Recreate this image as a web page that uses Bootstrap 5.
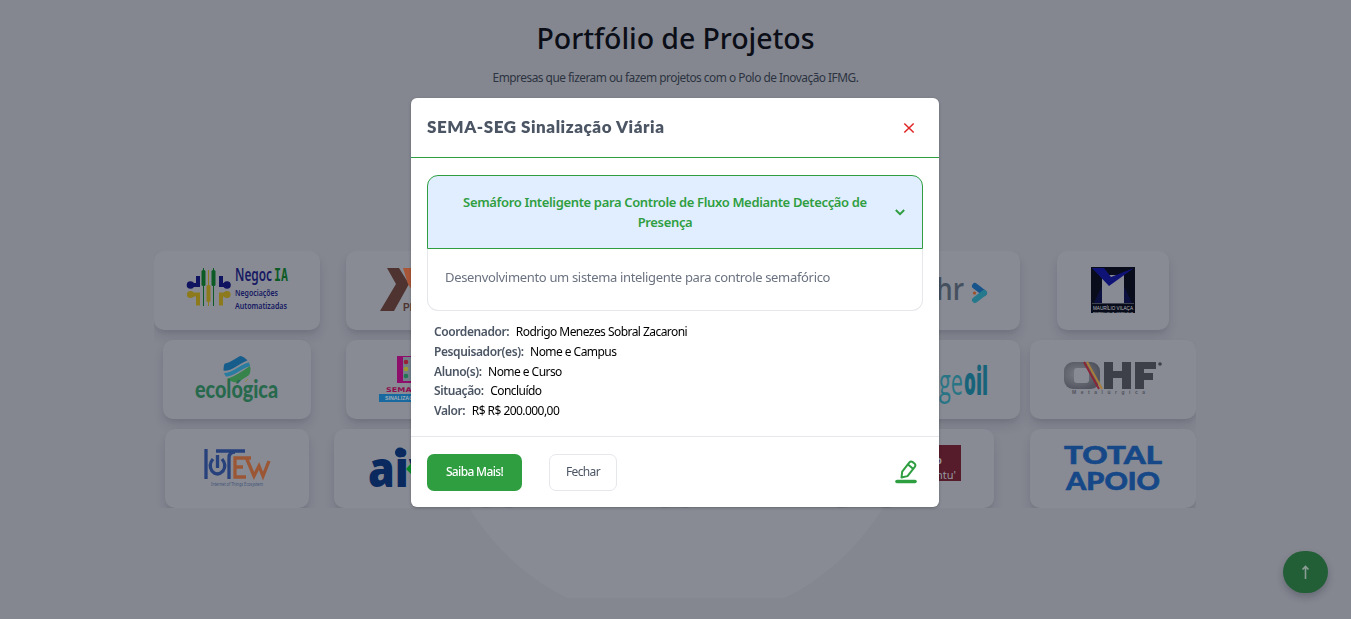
<!DOCTYPE html>
<html lang="pt-BR">
<head>
<meta charset="utf-8">
<title>Portfólio de Projetos</title>
<link rel="stylesheet" href="https://cdn.jsdelivr.net/npm/bootstrap@5.3.0/dist/css/bootstrap.min.css">
<style>
body{background:#848790;font-family:"Noto Sans","Open Sans",sans-serif;height:619px;overflow:hidden;color:#0b0e17}
.page-title{font-size:28.500px;font-weight:500;line-height:36px;padding-top:20px;margin:0;letter-spacing:-.08px}
.page-sub{font-size:11.900px;line-height:18px;margin:12px 0 0;color:#2c3340;letter-spacing:-.51px}
.disc{position:absolute;left:434px;top:140px;width:484px;height:457.5px;z-index:-1}
.logo-grid{width:1042px;margin:165px 0 0 154px;display:grid;grid-template-columns:repeat(6,166px);justify-content:space-between;grid-auto-rows:79px;row-gap:10.2px;overflow:hidden;justify-items:center}
.tile{background:#888b94;border-radius:10px;box-shadow:0 7px 12px -2px rgba(25,30,45,.15),0 3px 5px -2px rgba(25,30,45,.08);width:166px}
.tile svg{display:block;width:100%;height:79px}
.w164{width:164px}.w148{width:148px}.w144{width:144px}.w133{width:133px}.w157{width:157px}.w112{width:112px}
.modal-dialog{width:528px;max-width:528px;margin:98px 0 0 411px}
.modal-content{border:0;border-radius:6px;height:409px;box-shadow:0 1px 3px rgba(0,0,0,.25)}
.modal-header{height:60px;padding:0 24px 0 16px;border-bottom:1px solid #2f9e41;border-radius:0}
.modal-title{font:800 17px/24px Lato,sans-serif;color:#4b5563;letter-spacing:.55px;position:relative;top:-1px}
.modal-body{padding:17px 16px 0}
.acc-head{height:74px;border:1px solid #2f9e41;border-radius:11px 11px 0 0;background:#e1eeff;color:#2f9e41;font-size:13px;font-weight:600;line-height:20px;padding:0 17px 0 7px;letter-spacing:-.35px}
.acc-text{height:62px;border:1px solid #e5e7eb;border-top:0;border-radius:0 0 11px 11px;color:#6b7280;font-size:13px;line-height:20px;padding:18px 17px;letter-spacing:-.33px}
.facts{margin:11px 0 0 7px;font-size:12px;line-height:19.8px;color:#000;letter-spacing:-.55px}
.facts b{color:#4b5563;font-weight:600;margin-right:6.500px;letter-spacing:-.4px}
.modal-footer{height:71px;border-top:1px solid #e5e7eb;padding:0 21px 0 16px}
.modal-footer>*{margin:0}
.modal-footer .btn{height:37px;font-size:12px;border-radius:7px;padding:0;letter-spacing:-.65px;line-height:34px}
.btn-more{width:95px;background:#2f9e41;color:#fff;font-weight:500}
.modal-footer .btn-shut{width:68px;border:1px solid #e5e7eb;color:#4b5563;margin-left:27px}
.to-top{position:absolute;left:1283px;top:551px;width:45px;height:42px;border-radius:21px;background:#225f37;box-shadow:0 4px 7px rgba(20,25,40,.25)}
</style>
<script src="https://cdn.jsdelivr.net/npm/bootstrap@5.3.0/dist/js/bootstrap.bundle.min.js"></script>
</head>
<body>
<header class="text-center">
<h1 class="page-title">Portfólio de Projetos</h1>
<p class="page-sub">Empresas que fizeram ou fazem projetos com o Polo de Inovação IFMG.</p>
</header>
<svg class="disc" viewBox="0 0 484 457.5"><circle cx="242" cy="242" r="242" fill="#888b94"/></svg>
<main class="logo-grid">
<!-- first row -->
<div class="tile"><svg viewBox="0 0 166 79">
<g fill="none" stroke="#10135f" stroke-width="4"><path d="M35 34h9v-9M75 34h-8v-9"/></g>
<g fill="none" stroke="#8c7a1c" stroke-width="4"><path d="M35 43.500h9v11M75 43.500h-8v11"/></g>
<g fill="#10135f"><circle cx="36.500" cy="34" r="3.800"/><circle cx="73" cy="34" r="3.800"/></g><g fill="#8c7a1c"><circle cx="36.500" cy="43.500" r="3.600"/><circle cx="73" cy="43.500" r="3.600"/><rect x="52.500" y="34" width="4" height="17" rx="1.500"/><path d="M54 19h1v36h-1z"/></g>
<g fill="#0c5b25"><rect x="47.500" y="19" width="4" height="16" rx="1.500"/><rect x="57.500" y="19" width="4" height="16" rx="1.500"/><path d="M49 17h1v38h-1zM59 17h1v38h-1z"/></g>
<g font-family="Noto Sans" font-weight="600" fill="#171a62"><text x="81" y="30" font-size="17" textLength="37" lengthAdjust="spacingAndGlyphs">Negoc</text><text x="120" y="30" font-family="DejaVu Sans Mono" font-weight="700" font-size="17" fill="#0c5b25" textLength="14" lengthAdjust="spacingAndGlyphs">IA</text><text x="81" y="45" font-size="9.500" textLength="43" lengthAdjust="spacingAndGlyphs">Negociações</text><text x="81" y="58" font-size="9.500" textLength="52" lengthAdjust="spacingAndGlyphs">Automatizadas</text></g></svg></div>
<div class="tile w133"><svg viewBox="0 0 133 79"><path fill="#4e3330" d="M41 17h12l10 16-15 27H34l16-27z"/><path fill="#a95637" d="M58 17h14v32L62 33l-5-16z"/><text x="57" y="60" font-family="Liberation Sans" font-weight="700" font-size="10" fill="#4e3330">PRO</text></svg></div>
<div class="tile"></div><div class="tile"></div>
<div class="tile w164"><svg viewBox="0 0 164 79"><text x="80" y="49" font-family="Open Sans" font-weight="600" font-size="31" fill="#45505f" textLength="28" lengthAdjust="spacingAndGlyphs">hr</text><path d="M119 35l9 7" fill="none" stroke="#17548b" stroke-width="6" stroke-linecap="round"/><path d="M128 42l-9 7" fill="none" stroke="#26798c" stroke-width="6" stroke-linecap="round"/><circle cx="118.500" cy="42" r="1.600" fill="#9d4f26"/></svg></div>
<div class="tile w112"><svg viewBox="0 0 112 79"><path fill="#090d1b" d="M34 16h44v46H34z"/><path fill="#888b94" d="M45 24h22v28H45z"/><path fill="#101376" d="M35 17h12l7 9 23-9-25 18z"/><path fill="#0c103f" d="M45 35v17h-8zM67 35v17h8z"/><path d="M35 52.500h42" stroke="#777a84" stroke-width=".5"/><g font-family="Liberation Sans" fill="#b5b8bf"><text x="36" y="58.500" font-size="5" textLength="40" lengthAdjust="spacingAndGlyphs">MAURÍLIO VILAÇA</text><text x="36" y="61.800" font-size="2.300" textLength="40" lengthAdjust="spacingAndGlyphs">ENGENHARIA E AUTOMAÇÃO</text></g></svg></div>
<!-- second row -->
<div class="tile w148"><svg viewBox="0 0 148 79"><defs><clipPath id="globe"><circle cx="74" cy="29" r="13.500"/></clipPath></defs><g clip-path="url(#globe)" fill="none"><path d="M59 27c9 2 16-8 27-11" stroke="#175d8b" stroke-width="7"/><path d="M61 35c11 0 17-10 27-11" stroke="#277ca0" stroke-width="4"/><path d="M64 42c9-1 17-8 25-13" stroke="#37834c" stroke-width="7"/></g><path d="M82 42l3-3" stroke="#8b8a38"/><text x="32" y="58" font-family="Lato" font-weight="900" font-size="24" fill="#27694c" textLength="83" lengthAdjust="spacingAndGlyphs">ecológica</text></svg></div>
<div class="tile w133"><svg viewBox="0 0 133 79"><path fill="#8d0e6b" d="M51 16h24v27H51z"/><path fill="#73808a" d="M57 17h12v24H57z"/><circle cx="60" cy="22" r="2.300" fill="#9a2038"/><circle cx="60" cy="29" r="2.300" fill="#a0982d"/><circle cx="60" cy="36" r="2.300" fill="#247454"/><text x="40" y="51.500" font-family="DejaVu Sans" font-weight="700" font-size="6.500" fill="#8d0e4f" textLength="47" lengthAdjust="spacingAndGlyphs">SEMA-SEG</text><path fill="#1769a0" d="M33 54h66v8H33z"/><text x="39" y="60" font-family="Liberation Sans" font-weight="700" font-size="4.600" fill="#a2aeb8" textLength="55" lengthAdjust="spacingAndGlyphs">SINALIZAÇÃO VIÁRIA</text></svg></div>
<div class="tile"></div><div class="tile"></div>
<div class="tile w164"><svg viewBox="0 0 164 79"><text x="83" y="55" font-family="Open Sans" font-size="36" fill="#297585" textLength="24" lengthAdjust="spacingAndGlyphs">ge</text><text x="108" y="55" font-family="Open Sans" font-weight="800" font-size="39" fill="#17647a" textLength="24" lengthAdjust="spacingAndGlyphs">oil</text></svg></div>
<div class="tile"><svg viewBox="0 0 166 79"><defs><radialGradient id="steel" cx=".38" cy=".45" r=".6"><stop stop-color="#7b7d85"/><stop offset="1" stop-color="#51545e"/></radialGradient></defs><rect x="34" y="22" width="36" height="27" rx="9" fill="url(#steel)"/><rect x="44" y="28" width="15" height="15" rx="3" fill="#888b94"/><path d="M54 22l15 27" stroke="#8a2637" stroke-width="2"/><path d="M57 22l15 27" stroke="#a87f3a" stroke-width="2"/><path fill="#3d4049" d="M74 22h9v9h9v-9h9v27h-9V38h-9v11h-9zM105 22h21v7h-12v4h9v7h-9v9h-9z"/><circle cx="130" cy="24" r="1.800" fill="#3d4049"/><text x="42" y="54" font-family="Liberation Sans" font-weight="700" font-size="5" fill="#50535d" textLength="73">Metalúrgica</text></svg></div>
<!-- third row -->
<div class="tile w144"><svg viewBox="0 0 144 79"><g fill="none" stroke="#27417c" stroke-width="3.300"><path d="M41 20v30M51 22h29M64 50V29q0-6 6-6M48 30q-5 6-1 12 5 6 11 0 4-6-1-12M52.500 26v13"/></g><g fill="none" stroke="#9b5735" stroke-width="3.300"><path d="M86 29H70v19h11M70 38h8M81 28l8 19 5-10 4 10 6-15"/></g><text x="46" y="57" font-family="Noto Sans" font-size="4.500" fill="#425579" textLength="52" lengthAdjust="spacingAndGlyphs">Internet of Things Ecosystem</text></svg></div>
<div class="tile w157"><svg viewBox="0 0 157 79"><text x="34" y="58" font-family="Open Sans" font-weight="800" font-size="49" fill="#0a295f" textLength="67" lengthAdjust="spacingAndGlyphs">aiv</text><circle cx="66" cy="23.500" r="5" fill="#0a295f"/><path d="M72 40l8-9v17z" fill="#0b8a27"/></svg></div>
<div class="tile"></div><div class="tile"></div>
<div class="tile w112"><svg viewBox="0 0 112 79"><path fill="#571c2b" d="M32 16h47v36H32z"/><g fill="#9599a1" font-family="Noto Sans"><text x="53" y="35" font-size="11" font-weight="700">p</text><text x="54" y="50" font-size="11">ntu'</text></g></svg></div>
<div class="tile"><svg viewBox="0 0 166 79"><g font-family="Lato" font-weight="900" fill="#164888" stroke="#164888" stroke-width=".6" font-size="25.500"><text x="34" y="35" textLength="98" lengthAdjust="spacingAndGlyphs">TOTAL</text><text x="36" y="61" textLength="94" lengthAdjust="spacingAndGlyphs">APOIO</text></g></svg></div>
</main>
<button class="btn border-0 p-0 to-top" aria-label="Voltar ao topo"><svg class="d-block mx-auto" width="12" height="16" viewBox="0 0 12 16"><path d="M5.500 15V3M2.500 5.500l3-3 3 3" fill="none" stroke="#8b9d95" stroke-width="1.600"/></svg></button>
<div class="modal d-block overflow-hidden" tabindex="-1"><div class="modal-dialog"><div class="modal-content">
<div class="modal-header d-flex justify-content-between align-items-center"><h2 class="modal-title">SEMA-SEG Sinalização Viária</h2>
<svg width="12" height="12" viewBox="0 0 12 12"><path d="M1.300 1.500l9.400 9M10.700 1.500l-9.400 9" stroke="#e02424" stroke-width="1.500"/></svg></div>
<div class="modal-body">
<div class="acc-head d-flex align-items-center"><div class="flex-grow-1 text-center">Semáforo Inteligente para Controle de Fluxo Mediante Detecção de<br>Presença</div><svg width="10" height="7" viewBox="0 0 10 7"><path d="M.8 1L5 5.200 9.200 1" fill="none" stroke="#2f9e41" stroke-width="2"/></svg></div>
<div class="acc-text">Desenvolvimento um sistema inteligente para controle semafórico</div>
<div class="facts">
<div><b>Coordenador:</b>Rodrigo Menezes Sobral Zacaroni</div>
<div><b>Pesquisador(es):</b>Nome e Campus</div>
<div><b>Aluno(s):</b>Nome e Curso</div>
<div><b>Situação:</b>Concluído</div>
<div><b>Valor:</b>R$ R$ 200.000,00</div>
</div></div>
<div class="modal-footer d-flex justify-content-start flex-nowrap"><button class="btn btn-more">Saiba Mais!</button><button class="btn btn-shut">Fechar</button>
<svg class="ms-auto" width="24" height="24" viewBox="0 0 24 24"><g fill="none" stroke="#2f9e41" stroke-width="2" stroke-linejoin="round"><path d="M7.500 17.500l.7-5.800 7.200-9.300q1.500-1.600 3.300-.3l1.800 1.400q1.600 1.500.3 3.300l-7.300 9.300zM14 4.500l4.500 3.700"/><path d="M3 21.500h18" stroke-width="3.600" stroke-linecap="round"/></g></svg></div>
</div></div></div>
</body>
</html>
